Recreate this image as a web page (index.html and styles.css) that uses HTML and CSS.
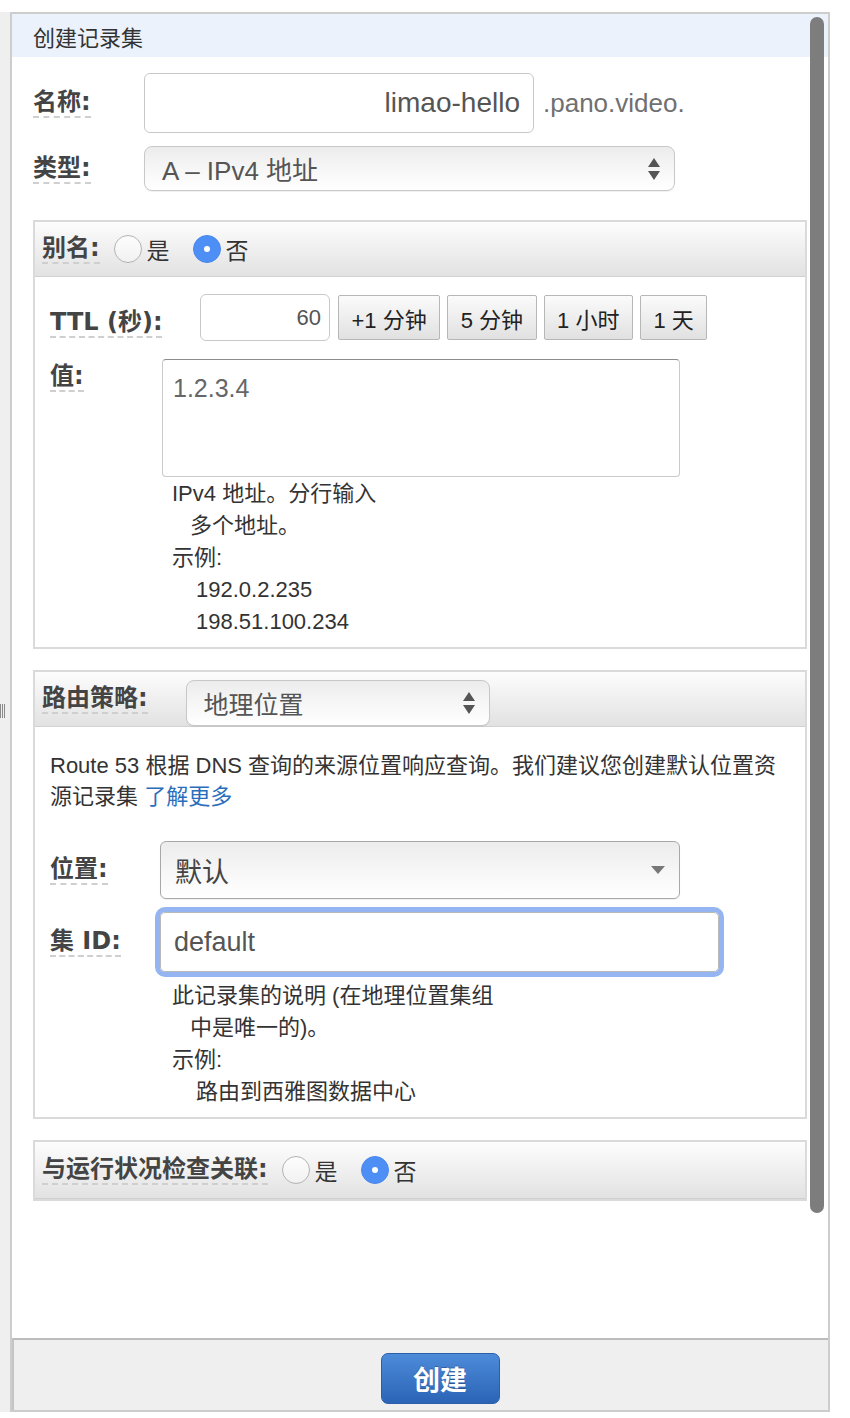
FILE: index.html
```html
<!DOCTYPE html>
<html lang="zh-CN">
<head>
<meta charset="utf-8">
<title>创建记录集</title>
<link rel="stylesheet" href="styles.css">
</head>
<body>
<div class="screen">
  <div class="strip"><span class="grip"></span></div>
  <div class="dialog">
    <div class="dlg-title">创建记录集</div>
    <div class="dlg-body">
      <div class="row">
        <div class="lcol w111"><span class="lbl">名称:</span></div>
        <div class="name-input">limao-hello</div>
        <span class="suffix">.pano.video.</span>
      </div>
      <div class="row row-type">
        <div class="lcol w111"><span class="lbl">类型:</span></div>
        <div class="select type-select">
          <span>A – IPv4 地址</span>
          <svg class="updown" width="12" height="22" viewBox="0 0 12 22"><path d="M6 0 L12 9 L0 9 Z M0 13 L12 13 L6 22 Z" fill="#555"/></svg>
        </div>
      </div>

      <section class="box">
        <div class="box-head">
          <span class="lbl">别名:</span>
          <span class="radio first"><span class="dot"></span>是</span>
          <span class="radio on"><span class="dot"></span>否</span>
        </div>
        <div class="box-body body1">
          <div class="row">
            <div class="lcol w150 ttl-lcol"><span class="lbl">TTL (秒):</span></div>
            <div class="ttl-input">60</div>
            <div class="btns">
              <span class="btn">+1 分钟</span>
              <span class="btn">5 分钟</span>
              <span class="btn">1 小时</span>
              <span class="btn">1 天</span>
            </div>
          </div>
          <div class="row row-top row-value">
            <div class="lcol w112"><span class="lbl">值:</span></div>
            <div class="textarea">1.2.3.4</div>
          </div>
          <div class="help help1">
            <div>IPv4 地址。分行输入</div>
            <div class="ind1">多个地址。</div>
            <div>示例:</div>
            <div class="ind2">192.0.2.235</div>
            <div class="ind2">198.51.100.234</div>
          </div>
        </div>
      </section>

      <section class="box box-gap">
        <div class="box-head">
          <span class="lbl">路由策略:</span>
          <div class="select policy-select">
            <span>地理位置</span>
            <svg class="updown" width="12" height="22" viewBox="0 0 12 22"><path d="M6 0 L12 9 L0 9 Z M0 13 L12 13 L6 22 Z" fill="#555"/></svg>
          </div>
        </div>
        <div class="box-body body2">
          <p class="para">Route 53 根据 DNS 查询的来源位置响应查询。我们建议您创建默认位置资<br>源记录集 <a class="link">了解更多</a></p>
          <div class="row row-loc">
            <div class="lcol w110"><span class="lbl">位置:</span></div>
            <div class="select loc-select">
              <span>默认</span>
              <svg width="14" height="8" viewBox="0 0 14 8"><path d="M0 0 L14 0 L7 8 Z" fill="#777"/></svg>
            </div>
          </div>
          <div class="row row-id">
            <div class="lcol w110"><span class="lbl">集 ID:</span></div>
            <div class="id-input">default</div>
          </div>
          <div class="help help2">
            <div>此记录集的说明 (在地理位置集组</div>
            <div class="ind1">中是唯一的)。</div>
            <div>示例:</div>
            <div class="ind2">路由到西雅图数据中心</div>
          </div>
        </div>
      </section>

      <section class="box box-gap">
        <div class="box-head">
          <span class="lbl">与运行状况检查关联:</span>
          <span class="radio first"><span class="dot"></span>是</span>
          <span class="radio on"><span class="dot"></span>否</span>
        </div>
      </section>
    </div>
    <div class="scrollbar"></div>
    <div class="dlg-foot"><span class="create">创建</span></div>
  </div>
</div>
</body>
</html>
```
FILE: styles.css
```css
html, body {
  margin: 0;
  padding: 0;
  background: #fff;
}
body {
  font-family: "Liberation Sans", "Noto Sans CJK SC", sans-serif;
  color: #333;
}
.screen {
  display: flex;
  margin-top: 12px;
  width: 850px;
}
.strip {
  width: 10px;
  background: #efefef;
  position: relative;
}
.grip {
  position: absolute;
  left: 0;
  top: 692px;
  width: 5px;
  height: 14px;
  background: repeating-linear-gradient(90deg, #8a8a8a 0 1px, transparent 1px 2px);
}
.dialog {
  width: 820px;
  height: 1400px;
  box-sizing: border-box;
  border: 2px solid #cdcdcd;
  background: #fff;
  position: relative;
  display: flex;
  flex-direction: column;
}
.dlg-title {
  height: 43px;
  flex: none;
  background: #ebf2fc;
  padding-left: 21px;
  display: flex;
  align-items: center;
  font-size: 22px;
  color: #333;
}
.dlg-body {
  height: 1281px;
  flex: none;
  box-sizing: border-box;
  padding: 16px 21px 0 21px;
}
.scrollbar {
  position: absolute;
  right: 4px;
  top: 3px;
  width: 14px;
  height: 1196px;
  border-radius: 7px;
  background: #7d7d7d;
}
.dlg-foot {
  height: 72px;
  flex: none;
  box-sizing: border-box;
  border-top: 2px solid #bcbcbc;
  border-left: 2px solid #c4c4c4;
  background: #efefef;
  display: flex;
  justify-content: center;
  align-items: flex-start;
  padding: 13px 0 0 38px;
}
.create {
  width: 119px;
  height: 51px;
  box-sizing: border-box;
  border: 1px solid #2b5fa9;
  border-radius: 7px;
  background: linear-gradient(#4d8bd9, #2b64b6);
  color: #fff;
  font-weight: bold;
  font-size: 27px;
  display: flex;
  align-items: center;
  justify-content: center;
  text-shadow: 0 -1px 0 rgba(0,0,0,0.25);
}

/* rows and labels */
.row {
  display: flex;
  align-items: center;
}
.row-top {
  align-items: flex-start;
}
.lcol {
  flex: none;
}
.w110 { width: 110px; }
.w111 { width: 111px; }
.w112 { width: 112px; }
.w150 { width: 150px; }
.lbl {
  font-family: "DejaVu Sans", "Noto Sans CJK SC", sans-serif;
  font-weight: bold;
  font-size: 24px;
  line-height: 28px;
  color: #444;
  border-bottom: 2px dashed #cfcfcf;
  display: inline-block;
  white-space: nowrap;
}
.ttl-lcol {
  margin-top: 10px;
}

.name-input {
  width: 390px;
  height: 60px;
  box-sizing: border-box;
  border: 1px solid #c9c9c9;
  border-radius: 6px;
  display: flex;
  align-items: center;
  justify-content: flex-end;
  padding-right: 13px;
  font-size: 28px;
  color: #555;
}
.suffix {
  margin-left: 9px;
  font-size: 26px;
  color: #707070;
}
.row-type {
  margin-top: 13px;
}
.select {
  box-sizing: border-box;
  border: 1px solid #c8c8c8;
  border-radius: 8px;
  background: linear-gradient(#ececec, #f7f7f7 55%, #fff);
  display: flex;
  align-items: center;
  justify-content: space-between;
  color: #555;
  box-shadow: 0 1px 1px rgba(0,0,0,0.06);
}
.type-select {
  width: 531px;
  height: 45px;
  padding: 0 14px 0 17px;
  font-size: 26px;
}

/* boxes */
.box {
  margin-top: 29px;
  border: 2px solid #dadada;
}
.box-gap {
  margin-top: 21px;
}
.box-head {
  height: 55px;
  box-sizing: border-box;
  border-bottom: 1px solid #d2d2d2;
  background: linear-gradient(#fdfdfd, #e2e2e2);
  display: flex;
  align-items: center;
  padding-left: 7px;
}
.box-gap:last-child .box-head {
  height: 57px;
  border-bottom: 1px solid #cfcfcf;
}
.radio {
  display: inline-flex;
  align-items: center;
  font-size: 23px;
  color: #333;
  margin-left: 23px;
}
.radio.first {
  margin-left: 14px;
}
.dot {
  width: 28px;
  height: 28px;
  box-sizing: border-box;
  border-radius: 50%;
  border: 1px solid #b3b3b3;
  background: linear-gradient(#fdfdfd, #f1f1f1);
  margin-right: 5px;
  position: relative;
}
.radio.on .dot {
  border-color: #4a88ee;
  background: #4d8ff5;
}
.radio.on .dot::after {
  content: "";
  position: absolute;
  left: 10px;
  top: 10px;
  width: 6px;
  height: 6px;
  border-radius: 50%;
  background: #fff;
}
.box-body {
  padding: 17px 16px 11px 15px;
}
.body1 {
  padding-bottom: 9px;
}
.ttl-input {
  width: 130px;
  height: 47px;
  box-sizing: border-box;
  border: 1px solid #c9c9c9;
  border-radius: 6px;
  display: flex;
  align-items: center;
  justify-content: flex-end;
  padding-right: 8px;
  font-size: 22px;
  color: #555;
}
.btns {
  display: flex;
  gap: 7px;
  margin-left: 8px;
}
.btn {
  height: 45px;
  box-sizing: border-box;
  padding: 0 12.5px;
  border: 1px solid #b7b7b7;
  border-radius: 2px;
  background: linear-gradient(#fbfbfb, #e1e1e1);
  display: flex;
  align-items: center;
  font-size: 22px;
  color: #222;
  white-space: nowrap;
}
.row-value {
  margin-top: 18px;
}
.row-value .lbl {
  margin-top: 3px;
}
.textarea {
  width: 518px;
  height: 118px;
  box-sizing: border-box;
  border: 1px solid #cacaca;
  border-top-color: #8c8c8c;
  border-radius: 4px;
  padding: 13px 10px 0;
  font-size: 25px;
  line-height: 30px;
  color: #666;
}
.help {
  margin-left: 122px;
  font-size: 22px;
  line-height: 32px;
  color: #333;
  white-space: nowrap;
}
.help1 {
  margin-top: 1px;
}
.ind1 { padding-left: 18px; }
.ind2 { padding-left: 24px; }

.policy-select {
  width: 304px;
  height: 46px;
  margin: 7px 0 0 38px;
  padding: 0 14px 0 17px;
  font-size: 25px;
}
.body2 {
  padding-top: 23px;
  padding-bottom: 9px;
}
.para {
  margin: 0;
  font-size: 22px;
  line-height: 31px;
  color: #333;
  white-space: nowrap;
}
.link {
  color: #2a6ebb;
}
.row-loc {
  margin-top: 29px;
}
.loc-select {
  width: 520px;
  height: 58px;
  border-color: #a8a8a8;
  border-radius: 6px;
  padding: 0 14px 0 14px;
  font-size: 27px;
  color: #444;
}
.row-id {
  margin-top: 13px;
}
.id-input {
  width: 559px;
  height: 60px;
  box-sizing: border-box;
  border: 1px solid #b9b9b9;
  border-radius: 5px;
  box-shadow: 0 0 0 5px #94b4f2;
  display: flex;
  align-items: center;
  padding-left: 13px;
  font-size: 27px;
  color: #555;
}
.help2 {
  margin-top: 8px;
}
```
